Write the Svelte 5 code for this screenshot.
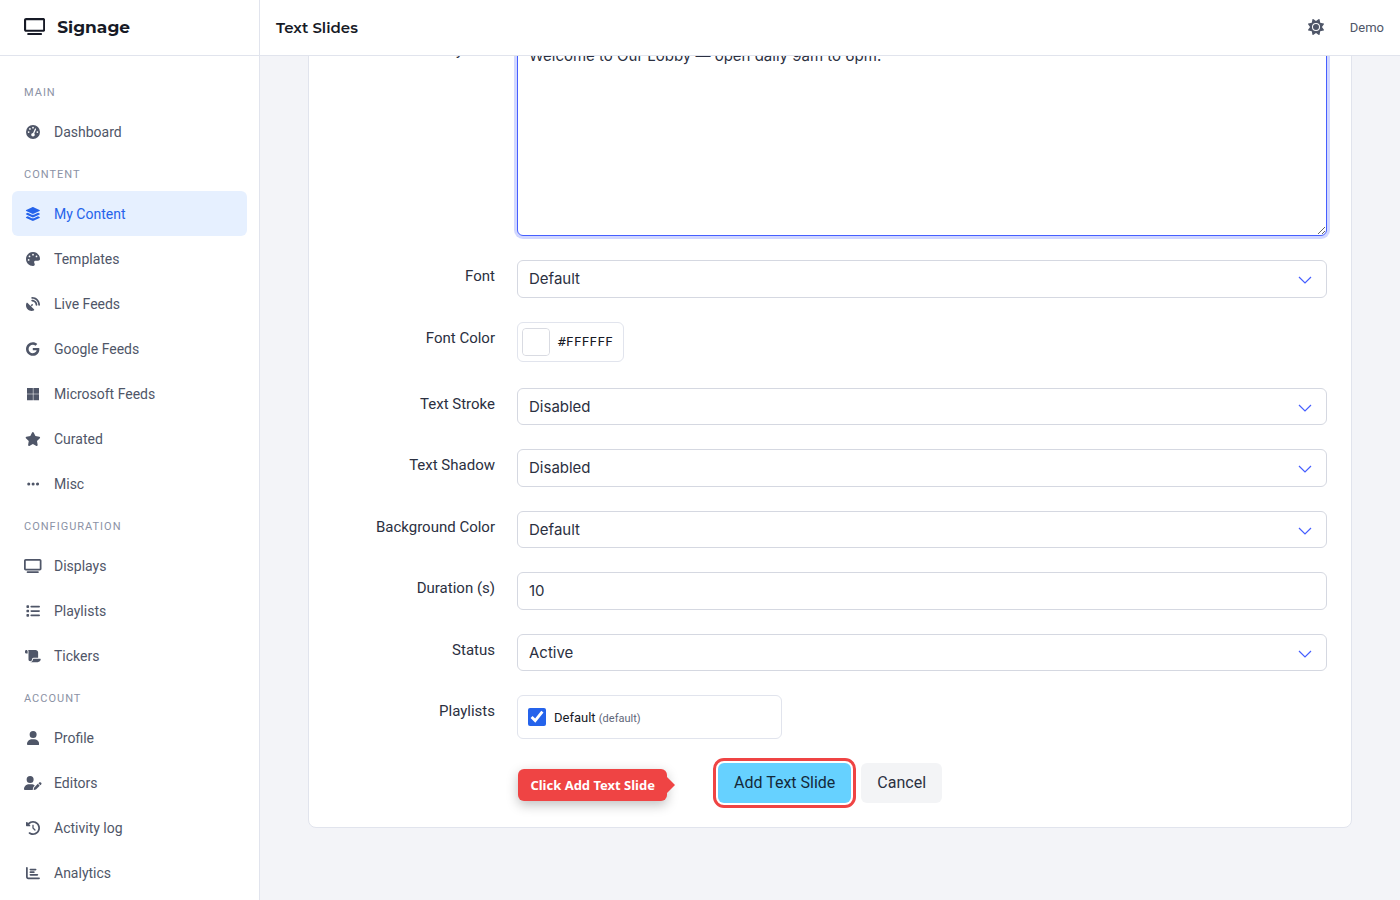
<script lang="ts">
  interface NavItem {
    label: string;
    icon: string;
    href: string;
  }

  interface NavSection {
    title: string;
    items: NavItem[];
  }

  interface Icon {
    width: number;
    path: string;
  }

  const icons: Record<string, Icon> = {
    gauge: {
      width: 512,
      path: 'M0 256a256 256 0 1 1 512 0A256 256 0 1 1 0 256zM288 96a32 32 0 1 0 -64 0 32 32 0 1 0 64 0zM256 416c35.3 0 64-28.7 64-64c0-17.4-6.9-33.1-18.1-44.6L366 161.7c5.3-12.1-.2-26.3-12.3-31.6s-26.3 .2-31.6 12.3L257.9 288c-.6 0-1.3 0-1.9 0c-35.3 0-64 28.7-64 64s28.7 64 64 64zM176 144a32 32 0 1 0 -64 0 32 32 0 1 0 64 0zM96 288a32 32 0 1 0 0-64 32 32 0 1 0 0 64zm352-32a32 32 0 1 0 -64 0 32 32 0 1 0 64 0z'
    },
    layers: {
      width: 576,
      path: 'M264.5 5.2c14.9-6.9 32.1-6.9 47 0l218.6 101c8.5 3.9 13.9 12.4 13.9 21.8s-5.4 17.9-13.9 21.8l-218.6 101c-14.9 6.9-32.1 6.9-47 0L45.9 149.8C37.4 145.8 32 137.3 32 128s5.4-17.9 13.9-21.8L264.5 5.2zM476.9 209.6l53.2 24.6c8.5 3.9 13.9 12.4 13.9 21.8s-5.4 17.9-13.9 21.8l-218.6 101c-14.9 6.9-32.1 6.9-47 0L45.9 277.8C37.4 273.8 32 265.3 32 256s5.4-17.9 13.9-21.8l53.2-24.6 152 70.2c23.4 10.8 50.4 10.8 73.8 0l152-70.2zm-152 198.2l152-70.2 53.2 24.6c8.5 3.9 13.9 12.4 13.9 21.8s-5.4 17.9-13.9 21.8l-218.6 101c-14.9 6.9-32.1 6.9-47 0L45.9 405.8C37.4 401.8 32 393.3 32 384s5.4-17.9 13.9-21.8l53.2-24.6 152 70.2c23.4 10.8 50.4 10.8 73.8 0z'
    },
    palette: {
      width: 512,
      path: 'M512 256c0 .9 0 1.8 0 2.7c-.4 36.5-33.6 61.3-70.1 61.3H344c-26.5 0-48 21.5-48 48c0 3.4 .4 6.7 1 9.9c2.1 10.2 6.5 20 10.8 29.9c6.1 13.8 12.1 27.5 12.1 42c0 31.8-21.6 60.7-53.4 62c-3.5 .1-7 .2-10.6 .2C114.6 512 0 397.4 0 256S114.6 0 256 0S512 114.6 512 256zM128 288a32 32 0 1 0 -64 0 32 32 0 1 0 64 0zm0-96a32 32 0 1 0 0-64 32 32 0 1 0 0 64zM288 96a32 32 0 1 0 -64 0 32 32 0 1 0 64 0zm96 96a32 32 0 1 0 0-64 32 32 0 1 0 0 64z'
    },
    satellite: {
      width: 512,
      path: 'M192 32c0-17.7 14.3-32 32-32C383.1 0 512 128.9 512 288c0 17.7-14.3 32-32 32s-32-14.3-32-32C448 164.3 347.7 64 224 64c-17.7 0-32-14.3-32-32zM60.6 220.6L164.7 324.7l28.4-28.4c-.7-2.6-1.1-5.4-1.1-8.3c0-17.7 14.3-32 32-32s32 14.3 32 32s-14.3 32-32 32c-2.9 0-5.6-.4-8.3-1.1l-28.4 28.4L291.4 451.4c14.5 14.5 11.8 38.8-7.3 46.3C260.5 506.9 234.9 512 208 512C93.1 512 0 418.9 0 304c0-26.9 5.1-52.5 14.4-76.1c7.5-19 31.8-21.8 46.3-7.3zM224 96c106 0 192 86 192 192c0 17.7-14.3 32-32 32s-32-14.3-32-32c0-70.7-57.3-128-128-128c-17.7 0-32-14.3-32-32s14.3-32 32-32z'
    },
    google: {
      width: 488,
      path: 'M488 261.8C488 403.3 391.1 504 248 504 110.8 504 0 393.2 0 256S110.8 8 248 8c66.8 0 123 24.5 166.3 64.9l-67.5 64.9C258.5 52.6 94.3 116.6 94.3 256c0 86.5 69.1 156.6 153.7 156.6 98.2 0 135-70.4 140.8-106.9H248v-85.3h236.1c2.3 12.7 3.9 24.9 3.9 41.4z'
    },
    microsoft: {
      width: 448,
      path: 'M0 32h214.6v214.6H0V32zm233.4 0H448v214.6H233.4V32zM0 265.4h214.6V480H0V265.4zm233.4 0H448V480H233.4V265.4z'
    },
    star: {
      width: 576,
      path: 'M316.9 18C311.6 7 300.4 0 288.1 0s-23.4 7-28.8 18L195 150.3 51.4 171.5c-12 1.8-22 10.2-25.7 21.7s-.7 24.2 7.9 32.7L137.8 329 113.2 474.7c-2 12 3 24.2 12.9 31.3s23 8 33.8 2.3l128.3-68.5 128.3 68.5c10.8 5.7 23.9 4.9 33.8-2.3s14.9-19.3 12.9-31.3L438.5 329 542.7 225.9c8.6-8.5 11.7-21.2 7.9-32.7s-13.7-19.9-25.7-21.7L381.2 150.3 316.9 18z'
    },
    ellipsis: {
      width: 448,
      path: 'M8 256a56 56 0 1 1 112 0A56 56 0 1 1 8 256zm160 0a56 56 0 1 1 112 0 56 56 0 1 1 -112 0zm216-56a56 56 0 1 1 0 112 56 56 0 1 1 0-112z'
    },
    tv: {
      width: 640,
      path: 'M64 64V352H576V64H64zM0 64C0 28.7 28.7 0 64 0H576c35.3 0 64 28.7 64 64V352c0 35.3-28.7 64-64 64H64c-35.3 0-64-28.7-64-64V64zM128 448H512c17.7 0 32 14.3 32 32s-14.3 32-32 32H128c-17.7 0-32-14.3-32-32s14.3-32 32-32z'
    },
    list: {
      width: 512,
      path: 'M40 48C26.7 48 16 58.7 16 72v48c0 13.3 10.7 24 24 24H88c13.3 0 24-10.7 24-24V72c0-13.3-10.7-24-24-24H40zM192 64c-17.7 0-32 14.3-32 32s14.3 32 32 32H480c17.7 0 32-14.3 32-32s-14.3-32-32-32H192zm0 160c-17.7 0-32 14.3-32 32s14.3 32 32 32H480c17.7 0 32-14.3 32-32s-14.3-32-32-32H192zm0 160c-17.7 0-32 14.3-32 32s14.3 32 32 32H480c17.7 0 32-14.3 32-32s-14.3-32-32-32H192zM16 232v48c0 13.3 10.7 24 24 24H88c13.3 0 24-10.7 24-24V232c0-13.3-10.7-24-24-24H40c-13.3 0-24 10.7-24 24zM40 368c-13.3 0-24 10.7-24 24v48c0 13.3 10.7 24 24 24H88c13.3 0 24-10.7 24-24V392c0-13.3-10.7-24-24-24H40z'
    },
    scroll: {
      width: 576,
      path: 'M0 80v48c0 17.7 14.3 32 32 32H48 96V80c0-26.5-21.5-48-48-48S0 53.5 0 80zM112 32c10 13.4 16 30 16 48V384c0 35.3 28.7 64 64 64s64-28.7 64-64v-5.3c0-32.4 26.3-58.7 58.7-58.7H480V128c0-53-43-96-96-96H112zM464 480c61.9 0 112-50.1 112-112c0-8.8-7.2-16-16-16H314.7c-14.7 0-26.7 11.9-26.7 26.7V384c0 53-43 96-96 96H368h96z'
    },
    user: {
      width: 448,
      path: 'M224 256A128 128 0 1 0 224 0a128 128 0 1 0 0 256zm-45.7 48C79.8 304 0 383.8 0 482.3C0 498.7 13.3 512 29.7 512H418.3c16.4 0 29.7-13.3 29.7-29.7C448 383.8 368.2 304 269.7 304H178.3z'
    },
    userPen: {
      width: 640,
      path: 'M224 256A128 128 0 1 0 224 0a128 128 0 1 0 0 256zm-45.7 48C79.8 304 0 383.8 0 482.3C0 498.7 13.3 512 29.7 512H322.8c-3.1-8.8-3.7-18.4-1.4-27.8l15-60.1c2.8-11.3 8.6-21.5 16.8-29.7l40.3-40.3c-32.1-31-75.7-50.1-123.9-50.1H178.3zm435.5-68.3c-15.6-15.6-40.9-15.6-56.6 0l-29.4 29.4 71 71 29.4-29.4c15.6-15.6 15.6-40.9 0-56.6l-14.4-14.4zM375.9 417c-4.1 4.1-7 9.2-8.4 14.9l-15 60.1c-1.4 5.5 .2 11.2 4.2 15.2s9.7 5.6 15.2 4.2l60.1-15c5.6-1.4 10.8-4.3 14.9-8.4L576.1 358.7l-71-71L375.9 417z'
    },
    history: {
      width: 512,
      path: 'M75 75L41 41C25.9 25.9 0 36.6 0 57.9V168c0 13.3 10.7 24 24 24H134.1c21.4 0 32.1-25.9 17-41l-30.8-30.8C155 85.5 203 64 256 64c106 0 192 86 192 192s-86 192-192 192c-40.8 0-78.6-12.7-109.7-34.4c-14.5-10.1-34.4-6.6-44.6 7.9s-6.6 34.4 7.9 44.6C151.2 495 201.7 512 256 512c141.4 0 256-114.6 256-256S397.4 0 256 0C185.3 0 121.3 28.7 75 75zm181 53c-13.3 0-24 10.7-24 24V256c0 6.4 2.5 12.5 7 17l72 72c9.4 9.4 24.6 9.4 33.9 0s9.4-24.6 0-33.9l-65-65V152c0-13.3-10.7-24-24-24z'
    },
    chart: {
      width: 512,
      path: 'M32 32c17.7 0 32 14.3 32 32V400c0 8.8 7.2 16 16 16H480c17.7 0 32 14.3 32 32s-14.3 32-32 32H80c-44.2 0-80-35.8-80-80V64C0 46.3 14.3 32 32 32zm96 96c0-17.7 14.3-32 32-32l192 0c17.7 0 32 14.3 32 32s-14.3 32-32 32H160c-17.7 0-32-14.3-32-32zm32 64H288c17.7 0 32 14.3 32 32s-14.3 32-32 32H160c-17.7 0-32-14.3-32-32s14.3-32 32-32zm0 96H416c17.7 0 32 14.3 32 32s-14.3 32-32 32H160c-17.7 0-32-14.3-32-32s14.3-32 32-32z'
    },
    sun: {
      width: 512,
      path: 'M361.5 1.2c5 2.1 8.6 6.6 9.6 11.9L391 121l107.9 19.8c5.3 1 9.8 4.6 11.9 9.6s1.5 10.7-1.6 15.2L446.9 256l62.3 90.3c3.1 4.5 3.7 10.2 1.6 15.2s-6.6 8.6-11.9 9.6L391 391 371.1 498.9c-1 5.3-4.6 9.8-9.6 11.9s-10.7 1.5-15.2-1.6L256 446.9l-90.3 62.3c-4.5 3.1-10.2 3.7-15.2 1.6s-8.6-6.6-9.6-11.9L121 391 13.1 371.1c-5.3-1-9.8-4.6-11.9-9.6s-1.5-10.7 1.6-15.2L65.1 256 2.8 165.7c-3.1-4.5-3.7-10.2-1.6-15.2s6.6-8.6 11.9-9.6L121 121 140.9 13.1c1-5.3 4.6-9.8 9.6-11.9s10.7-1.5 15.2 1.6L256 65.1 346.3 2.8c4.5-3.1 10.2-3.7 15.2-1.6zM160 256a96 96 0 1 1 192 0 96 96 0 1 1 -192 0zm224 0a128 128 0 1 0 -256 0 128 128 0 1 0 256 0z'
    }
  };

  const sections: NavSection[] = [
    {
      title: 'Main',
      items: [{ label: 'Dashboard', icon: 'gauge', href: '#dashboard' }]
    },
    {
      title: 'Content',
      items: [
        { label: 'My Content', icon: 'layers', href: '#content' },
        { label: 'Templates', icon: 'palette', href: '#templates' },
        { label: 'Live Feeds', icon: 'satellite', href: '#live-feeds' },
        { label: 'Google Feeds', icon: 'google', href: '#google-feeds' },
        { label: 'Microsoft Feeds', icon: 'microsoft', href: '#microsoft-feeds' },
        { label: 'Curated', icon: 'star', href: '#curated' },
        { label: 'Misc', icon: 'ellipsis', href: '#misc' }
      ]
    },
    {
      title: 'Configuration',
      items: [
        { label: 'Displays', icon: 'tv', href: '#displays' },
        { label: 'Playlists', icon: 'list', href: '#playlists' },
        { label: 'Tickers', icon: 'scroll', href: '#tickers' }
      ]
    },
    {
      title: 'Account',
      items: [
        { label: 'Profile', icon: 'user', href: '#profile' },
        { label: 'Editors', icon: 'userPen', href: '#editors' },
        { label: 'Activity log', icon: 'history', href: '#activity' },
        { label: 'Analytics', icon: 'chart', href: '#analytics' }
      ]
    }
  ];

  let active = $state('#content');
  let body = $state('Welcome to Our Lobby — open daily 9am to 6pm.');
  let font = $state('Default');
  let fontColor = $state('#ffffff');
  let stroke = $state('Disabled');
  let shadow = $state('Disabled');
  let background = $state('Default');
  let duration = $state('10');
  let status = $state('Active');
  let inDefault = $state(true);
</script>

{#snippet glyph(name: string)}
  <svg class="icon" viewBox="0 0 {icons[name].width} 512" aria-hidden="true">
    <path d={icons[name].path} />
  </svg>
{/snippet}

<div class="layout">
  <aside class="sidebar">
    <a class="brand" href="#dashboard">
      {@render glyph('tv')}
      <span>Signage</span>
    </a>
    <nav class="nav">
      {#each sections as section}
        <h2 class="nav-title">{section.title}</h2>
        {#each section.items as item}
          <a
            class="nav-item"
            class:active={active === item.href}
            href={item.href}
            onclick={() => (active = item.href)}
          >
            <span class="nav-icon">{@render glyph(item.icon)}</span>
            <span>{item.label}</span>
          </a>
        {/each}
      {/each}
    </nav>
  </aside>

  <div class="page">
    <header class="topbar">
      <h1>Text Slides</h1>
      <div class="topbar-right">
        <button class="theme-btn" type="button" aria-label="Toggle theme">{@render glyph('sun')}</button>
        <a class="user-link" href="#profile">Demo</a>
      </div>
    </header>

    <main class="content">
      <form class="card" onsubmit={(e) => e.preventDefault()}>
        <div class="row">
          <label for="body">Body Text</label>
          <textarea id="body" class="control focused" bind:value={body}></textarea>
        </div>
        <div class="row">
          <label for="font">Font</label>
          <select id="font" class="control" bind:value={font}>
            <option>Default</option>
            <option>Roboto</option>
            <option>Open Sans</option>
          </select>
        </div>
        <div class="row">
          <label for="font-color">Font Color</label>
          <div class="color-cell">
            <div class="color-picker">
              <input id="font-color" type="color" bind:value={fontColor} />
              <span class="hex">{fontColor.toUpperCase()}</span>
            </div>
          </div>
        </div>
        <div class="row">
          <label for="stroke">Text Stroke</label>
          <select id="stroke" class="control" bind:value={stroke}>
            <option>Disabled</option>
            <option>Enabled</option>
          </select>
        </div>
        <div class="row">
          <label for="shadow">Text Shadow</label>
          <select id="shadow" class="control" bind:value={shadow}>
            <option>Disabled</option>
            <option>Enabled</option>
          </select>
        </div>
        <div class="row">
          <label for="background">Background Color</label>
          <select id="background" class="control" bind:value={background}>
            <option>Default</option>
            <option>Custom</option>
          </select>
        </div>
        <div class="row">
          <label for="duration">Duration (s)</label>
          <input id="duration" class="control" type="text" inputmode="numeric" bind:value={duration} />
        </div>
        <div class="row">
          <label for="status">Status</label>
          <select id="status" class="control" bind:value={status}>
            <option>Active</option>
            <option>Inactive</option>
          </select>
        </div>
        <div class="row">
          <span class="row-label">Playlists</span>
          <div class="playlists">
            <label class="playlist">
              <input type="checkbox" bind:checked={inDefault} />
              <span>Default <small>(default)</small></span>
            </label>
          </div>
        </div>
        <div class="actions">
          <div class="step">
            <div class="step-tip" role="tooltip">Click Add Text Slide</div>
            <button class="btn btn-primary" type="submit">Add Text Slide</button>
          </div>
          <button class="btn btn-light" type="button">Cancel</button>
        </div>
      </form>
    </main>
  </div>
</div>

<style>
  :global(body) {
    margin: 0;
    font-family: Roboto, 'Liberation Sans', sans-serif;
    color: #2b3041;
    background: #f3f4f8;
  }

  .layout {
    display: grid;
    grid-template-columns: 260px minmax(0, 1fr);
    height: 100vh;
  }

  .layout :is(*, *::before, *::after) {
    box-sizing: border-box;
  }

  .icon {
    display: block;
    height: 14px;
    fill: currentColor;
  }

  .sidebar {
    display: flex;
    flex-direction: column;
    min-height: 0;
    background: #fff;
    border-right: 1px solid #e1e4ed;
  }

  .brand {
    display: flex;
    align-items: center;
    gap: 12px;
    height: 56px;
    flex-shrink: 0;
    padding: 0 24px 2px;
    border-bottom: 1px solid #e1e4ed;
    color: #171a26;
    font-family: Montserrat, Inter, sans-serif;
    font-size: 17px;
    font-weight: 700;
    text-decoration: none;
  }

  .brand .icon {
    height: 17px;
  }

  .nav {
    flex: 1;
    min-height: 0;
    padding: 16px 12px;
    overflow-y: auto;
    scrollbar-width: none;
  }

  .nav-title {
    height: 37px;
    margin: 0;
    padding: 2px 12px 0;
    color: #8b92a5;
    font-size: 11px;
    font-weight: 400;
    line-height: 37px;
    letter-spacing: 1px;
    text-transform: uppercase;
  }

  .nav-item {
    display: flex;
    align-items: center;
    gap: 12px;
    height: 45px;
    padding: 0 12px;
    border-radius: 6px;
    color: #4f5668;
    font-size: 14px;
    text-decoration: none;
  }

  .nav-item.active {
    background: #e6f0ff;
    color: #2563eb;
  }

  .nav-icon {
    display: flex;
    justify-content: center;
    width: 18px;
  }

  .page {
    display: flex;
    flex-direction: column;
    min-height: 0;
  }

  .topbar {
    display: flex;
    align-items: center;
    justify-content: space-between;
    height: 56px;
    flex-shrink: 0;
    padding: 0 16px 1px;
    background: #fff;
    border-bottom: 1px solid #e1e4ed;
  }

  h1 {
    margin: 0;
    color: #171a26;
    font-family: Montserrat, Inter, sans-serif;
    font-size: 15px;
    font-weight: 600;
  }

  .topbar-right {
    display: flex;
    align-items: center;
    gap: 26px;
  }

  .theme-btn {
    padding: 0;
    border: none;
    background: none;
    color: #4f5668;
    cursor: pointer;
  }

  .theme-btn .icon {
    height: 16px;
  }

  .user-link {
    color: #4f5668;
    font-size: 13px;
    text-decoration: none;
  }

  /* column-reverse keeps the scroll position at the end of the form */
  .content {
    display: flex;
    flex-direction: column-reverse;
    flex: 1;
    min-height: 0;
    padding: 0 48px 72px;
    overflow-y: auto;
    scrollbar-width: none;
  }

  .card {
    display: flex;
    flex-direction: column;
    gap: 24px;
    padding: 24px;
    background: #fff;
    border: 1px solid #e1e4ed;
    border-radius: 8px;
  }

  .row {
    display: grid;
    grid-template-columns: minmax(0, 1fr) minmax(0, 5fr);
    column-gap: 22px;
    align-items: start;
  }

  .row > label,
  .row-label {
    padding-top: 5px;
    font-size: 15px;
    line-height: 1.5;
    text-align: right;
  }

  .control {
    width: 100%;
    margin: 0;
    padding: 7px 11px 6px;
    border: 1px solid #d5d8e1;
    border-radius: 6px;
    outline: none;
    background-color: #fff;
    color: #2b3041;
    font-family: Inter, sans-serif;
    font-size: 15px;
    line-height: 1.5;
  }

  select.control {
    appearance: none;
    background-image: url("data:image/svg+xml,%3Csvg xmlns='http://www.w3.org/2000/svg' viewBox='0 0 14 8'%3E%3Cpath d='M1 1l6 6 6-6' fill='none' stroke='%23465fff' stroke-width='1.2'/%3E%3C/svg%3E");
    background-repeat: no-repeat;
    background-position: right 14px top 15px;
    background-size: 14px 8px;
  }

  textarea.control {
    display: block;
    height: 202px;
    padding-top: 10px;
    resize: vertical;
  }

  .control.focused,
  .control:focus {
    border-color: #465fff;
    box-shadow: 0 0 0 3px rgba(70, 95, 255, 0.25);
  }

  .color-cell {
    min-height: 42px;
  }

  .color-picker {
    display: inline-flex;
    align-items: center;
    gap: 8px;
    height: 40px;
    padding: 0 10px 0 4px;
    border: 1px solid #e1e4ed;
    border-radius: 6px;
  }

  .color-picker input {
    appearance: none;
    width: 28px;
    height: 28px;
    padding: 0;
    border: 1px solid #d9dbe2;
    border-radius: 4px;
    background: none;
    cursor: pointer;
  }

  .color-picker input::-webkit-color-swatch-wrapper {
    padding: 0;
  }

  .color-picker input::-webkit-color-swatch {
    border: none;
    border-radius: 3px;
  }

  .hex {
    color: #171a26;
    font-family: 'DejaVu Sans Mono', monospace;
    font-size: 13px;
  }

  .playlists {
    justify-self: start;
    width: 265px;
    max-width: 100%;
    padding: 0 10px;
    border: 1px solid #e1e4ed;
    border-radius: 6px;
  }

  .playlist {
    display: flex;
    align-items: center;
    gap: 8px;
    height: 42px;
    color: #171a26;
    font-size: 13px;
  }

  .playlist input {
    width: 18px;
    height: 18px;
    margin: 0;
    accent-color: #2563eb;
  }

  .playlist small {
    color: #5f6679;
    font-size: 11px;
  }

  .actions {
    display: flex;
    justify-content: center;
    gap: 10px;
  }

  .step {
    position: relative;
  }

  .step-tip {
    position: absolute;
    top: 6px;
    right: calc(100% + 51px);
    padding: 0 12px;
    border-radius: 6px;
    background: #ef4444;
    box-shadow: 0 4px 12px rgba(0, 0, 0, 0.25);
    color: #fff;
    font-family: 'Noto Sans', sans-serif;
    font-size: 13px;
    font-weight: 700;
    line-height: 32px;
    white-space: nowrap;
  }

  .step-tip::after {
    content: '';
    position: absolute;
    top: 8px;
    left: 100%;
    border: 8px solid transparent;
    border-right: none;
    border-left-color: #ef4444;
  }

  .btn {
    height: 40px;
    padding: 0 16px 2px;
    border: none;
    border-radius: 6px;
    font-family: inherit;
    font-size: 16px;
    cursor: pointer;
  }

  .btn-primary {
    background: #66d1ff;
    color: #14293a;
    outline: 3px solid #ef4444;
    outline-offset: 2px;
  }

  .btn-light {
    background: #f3f4f6;
    color: #2b3041;
  }
</style>
